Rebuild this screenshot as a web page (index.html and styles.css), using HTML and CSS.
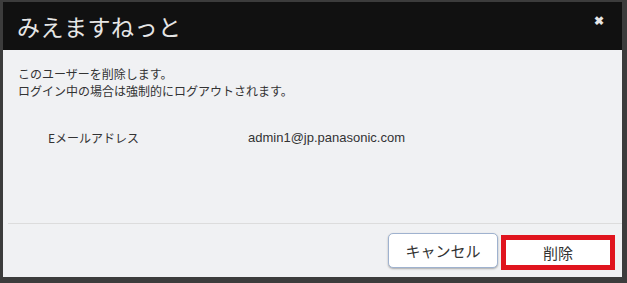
FILE: index.html
```html
<!DOCTYPE html>
<html lang="ja">
<head>
    <meta charset="UTF-8">
    <title>みえますねっと</title>
    <link rel="stylesheet" href="styles.css">
</head>
<body>
    <div class="modal">
        <div class="modal-header">
            <h1 class="modal-title">みえますねっと</h1>
            <span class="modal-close">&#10006;</span>
        </div>
        <div class="modal-body">
            <p class="message">このユーザーを削除します。<br>ログイン中の場合は強制的にログアウトされます。</p>
            <div class="info-row">
                <span class="info-label">Eメールアドレス</span>
                <span class="info-value">admin1@jp.panasonic.com</span>
            </div>
        </div>
        <div class="modal-footer">
            <button class="btn btn-cancel">キャンセル</button>
            <button class="btn btn-delete">削除</button>
        </div>
    </div>
</body>
</html>
```

FILE: styles.css
```css
body {
    margin: 0;
    background-color: #3c3c3c;
    font-family: "Noto Sans CJK JP", "Noto Sans", sans-serif;
    overflow: hidden;
}
.modal {
    margin: 2px 5px 0 3px;
    background-color: #f0f1f3;
    height: 275px;
    display: flex;
    flex-direction: column;
}
.modal-header {
    height: 48px;
    background-color: #111111;
    display: flex;
    align-items: center;
    justify-content: space-between;
    padding: 0 18px 0 14px;
}
.modal-title {
    margin: 0;
    font-size: 23px;
    font-weight: normal;
    color: #e6e6e6;
    letter-spacing: 0.5px;
}
.modal-close {
    align-self: flex-start;
    margin-top: 9px;
    color: #e6e6e6;
    font-size: 12px;
    font-weight: bold;
}
.modal-body {
    flex: 1;
    padding: 15px 15px 0;
    border-bottom: 1px solid #dcdcdc;
    margin-left: 5px;
}
.message {
    margin: 0 0 0 -5px;
    font-size: 12px;
    line-height: 17px;
    color: #333;
}
.info-row {
    display: flex;
    margin-top: 30px;
    font-size: 12px;
    line-height: 17px;
    color: #333;
}
.info-label {
    width: 200px;
    padding-left: 25px;
}
.info-value {
    font-family: "Liberation Sans", "Noto Sans CJK JP", sans-serif;
    font-size: 13px;
}
.modal-footer {
    height: 53px;
    display: flex;
    justify-content: flex-end;
    align-items: flex-start;
    gap: 3px;
    padding: 9px 7px 0 0;
    box-sizing: border-box;
}
.btn {
    font-family: "Noto Sans CJK JP", sans-serif;
    font-size: 15px;
    color: #333;
    background-color: #fff;
    cursor: pointer;
}
.btn-cancel {
    width: 110px;
    height: 35px;
    border: 1px solid #9fb2cf;
    border-radius: 5px;
    box-shadow: 0 1px 2px rgba(0,0,0,0.3);
}
.btn-delete {
    width: 114px;
    height: 35px;
    margin-top: 2px;
    border: 5px solid #e0141e;
    border-radius: 0;
}
```
